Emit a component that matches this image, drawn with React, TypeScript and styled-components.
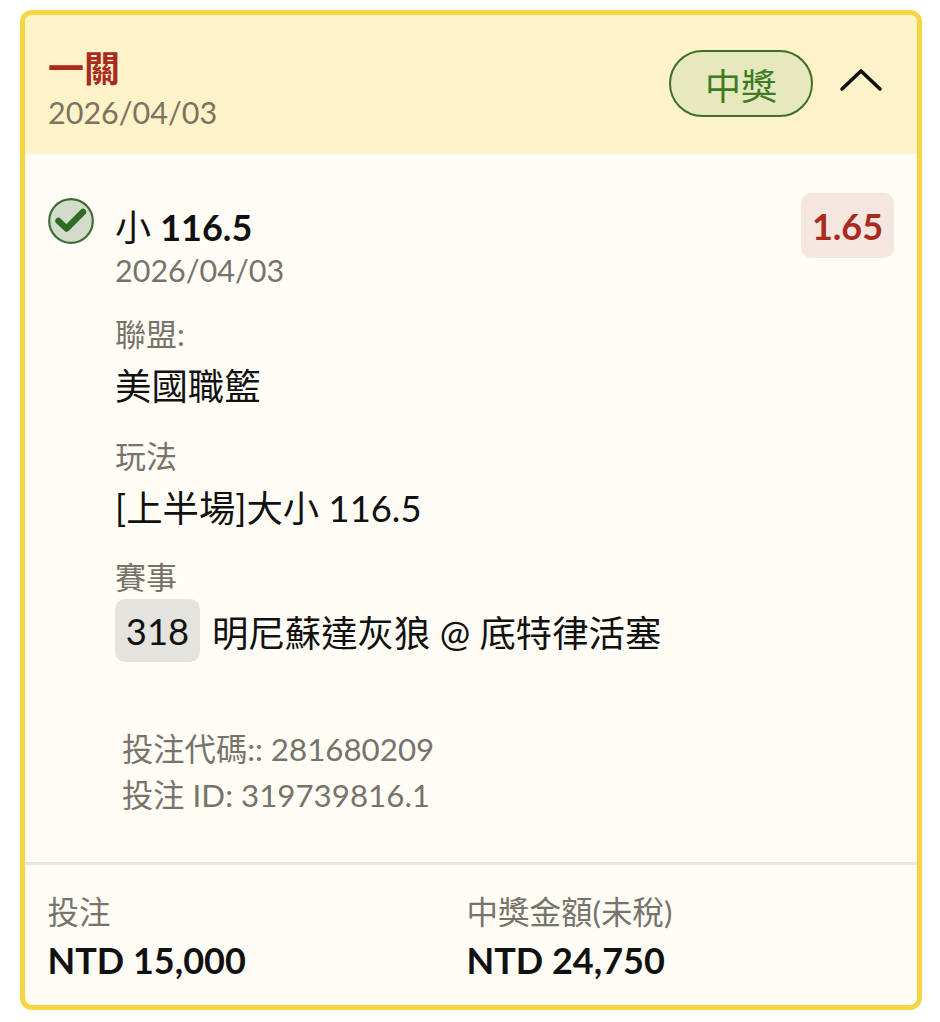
import React from 'react';
import styled, { createGlobalStyle } from 'styled-components';

const cjk = `Lato, 'Noto Sans CJK TC', sans-serif`;

const GlobalStyle = createGlobalStyle`
	html, body {
		margin: 0;
		padding: 0;
		background: #ffffff;
		font-family: ${cjk};
	}
`;

const Page = styled.div`
	padding: 10px 18px 12px 20px;
	height: 1000px;
`;

const Card = styled.div`
	box-sizing: border-box;
	height: 1000px;
	display: flex;
	flex-direction: column;
	border: 5px solid #f6d540;
	border-radius: 12px;
	background: #fffdf6;
	overflow: hidden;
`;

const Header = styled.div`
	box-sizing: border-box;
	height: 139px;
	flex: none;
	display: flex;
	align-items: center;
	justify-content: space-between;
	padding: 0 34px 0 23px;
	background: #fef2c8;
`;

const HeaderLeft = styled.div`
	padding-top: 11px;
`;

const Title = styled.div`
	font-size: 36px;
	line-height: 44px;
	font-weight: 700;
	color: #a92b20;
`;

const DateText = styled.div<{ $tone?: string; $line: number }>`
	font-size: 30.5px;
	line-height: ${(p) => p.$line}px;
	color: ${(p) => p.$tone || '#7a7361'};
`;

const HeaderRight = styled.div`
	display: flex;
	align-items: center;
	gap: 26px;
	margin-bottom: 2px;
`;

const WonPill = styled.div`
	box-sizing: border-box;
	width: 144px;
	height: 67px;
	display: flex;
	align-items: center;
	justify-content: center;
	border: 2px solid #3f6f2a;
	border-radius: 34px;
	background: #e6e8bd;
	color: #3f7a24;
	font-size: 36px;
`;

const Chevron = styled.svg`
	width: 44px;
	height: 28px;
	display: block;
	margin-bottom: 8px;
`;

const Body = styled.div`
	flex: 1;
	display: flex;
	flex-direction: column;
	padding: 39px 23px 0;
`;

const Selection = styled.div`
	display: flex;
	align-items: flex-start;
`;

const CheckIcon = styled.svg`
	width: 46px;
	height: 46px;
	flex: none;
	margin: 5px 21px 0 0;
`;

const SelectionInfo = styled.div`
	flex: 1;
	min-width: 0;
	padding-top: 14px;
`;

const SelectionName = styled.div`
	font-size: 36px;
	line-height: 40px;
	color: #111111;

	b {
		font-weight: 700;
	}
`;

const OddsBadge = styled.div`
	width: 93px;
	height: 65px;
	flex: none;
	display: flex;
	align-items: center;
	justify-content: center;
	border-radius: 10px;
	background: #f5e6e0;
	color: #a92b20;
	font-size: 36px;
	font-weight: 700;
`;

const Field = styled.div<{ $top: number }>`
	margin: ${(p) => p.$top}px 0 0 67px;
`;

const FieldLabel = styled.div`
	font-size: 31px;
	line-height: 38px;
	color: #77736a;
`;

const FieldValue = styled.div`
	font-size: 36.4px;
	line-height: 46px;
	margin-top: 10px;
	color: #111111;
`;

const MatchRow = styled.div`
	display: flex;
	align-items: center;
	gap: 12px;
	margin-top: 3px;
	font-size: 36.4px;
	color: #111111;
`;

const MatchNo = styled.div`
	width: 85px;
	height: 63px;
	display: flex;
	align-items: center;
	justify-content: center;
	border-radius: 10px;
	background: #e5e3dd;
`;

const Codes = styled.div`
	margin: 64px 0 0 74px;
	font-size: 31.3px;
	line-height: 46px;
	color: #77736a;
`;

const Footer = styled.div`
	box-sizing: border-box;
	height: 143px;
	flex: none;
	display: grid;
	grid-template-columns: 419px 1fr;
	padding: 28px 23px 0 22.5px;
	border-top: 3px solid #e8e6df;
`;

const FooterLabel = styled.div`
	font-size: 31.5px;
	line-height: 38px;
	color: #77736a;
`;

const FooterValue = styled.div`
	font-size: 36px;
	line-height: 46px;
	margin-top: 6px;
	font-weight: 700;
	color: #111111;
`;

const App: React.FC = () => {
	return (
		<Page>
			<GlobalStyle />
			<Card>
				<Header>
					<HeaderLeft>
						<Title>一關</Title>
						<DateText $line={44}>2026/04/03</DateText>
					</HeaderLeft>
					<HeaderRight>
						<WonPill>中獎</WonPill>
						<Chevron viewBox="0 0 44 28" fill="none">
							<path d="M3 23 L22 5 L41 23" stroke="#111" strokeWidth="3.6" strokeLinecap="round" strokeLinejoin="round" />
						</Chevron>
					</HeaderRight>
				</Header>
				<Body>
					<Selection>
						<CheckIcon viewBox="0 0 46 46" fill="none">
							<circle cx="23" cy="23" r="21.8" fill="#d3dccb" stroke="#3d6f35" strokeWidth="2.2" />
							<path d="M10.5 23 L18.5 30.5 L35 14" stroke="#2f6b22" strokeWidth="6.5" strokeLinecap="round" strokeLinejoin="round" />
						</CheckIcon>
						<SelectionInfo>
							<SelectionName>
								小 <b>116.5</b>
							</SelectionName>
							<DateText $tone="#77736a" $line={46}>
								2026/04/03
							</DateText>
						</SelectionInfo>
						<OddsBadge>1.65</OddsBadge>
					</Selection>
					<Field $top={22}>
						<FieldLabel>聯盟:</FieldLabel>
						<FieldValue>美國職籃</FieldValue>
					</Field>
					<Field $top={28}>
						<FieldLabel>玩法</FieldLabel>
						<FieldValue>[上半場]大小 116.5</FieldValue>
					</Field>
					<Field $top={27}>
						<FieldLabel>賽事</FieldLabel>
						<MatchRow>
							<MatchNo>318</MatchNo>
							<span>明尼蘇達灰狼 @ 底特律活塞</span>
						</MatchRow>
					</Field>
					<Codes>
						<div>投注代碼:: 281680209</div>
						<div>投注 ID: 319739816.1</div>
					</Codes>
				</Body>
				<Footer>
					<div>
						<FooterLabel>投注</FooterLabel>
						<FooterValue>NTD 15,000</FooterValue>
					</div>
					<div>
						<FooterLabel>中獎金額(未稅)</FooterLabel>
						<FooterValue>NTD 24,750</FooterValue>
					</div>
				</Footer>
			</Card>
		</Page>
	);
};

export default App;
